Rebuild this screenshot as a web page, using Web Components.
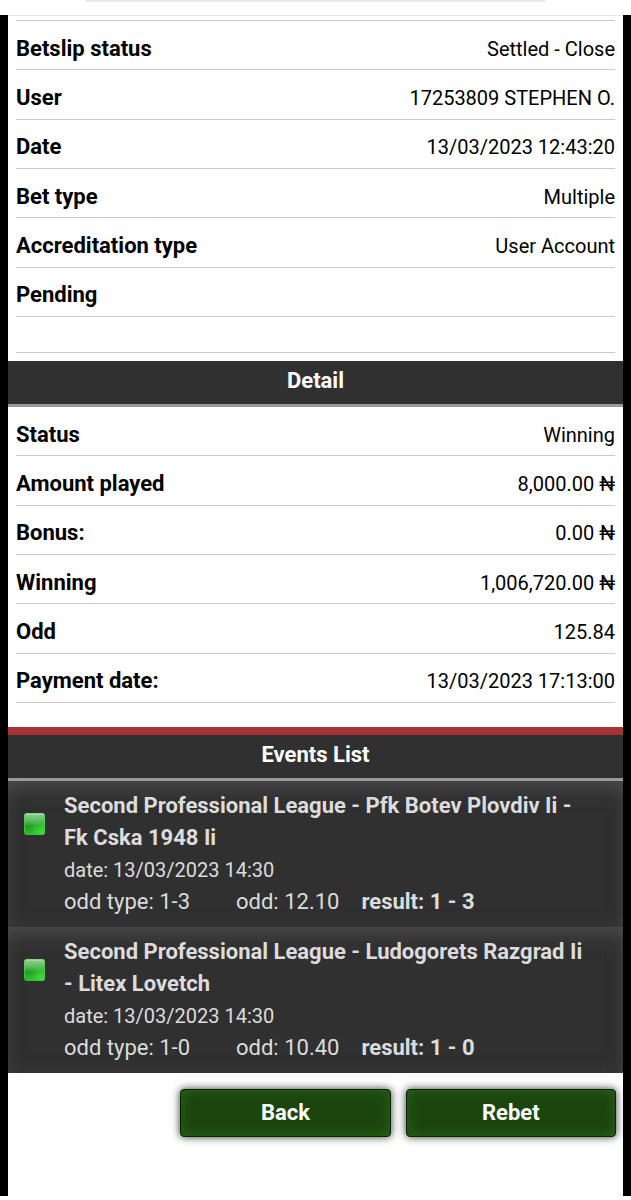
<!DOCTYPE html>
<html lang="en">
<head>
<meta charset="utf-8">
<meta name="viewport" content="width=device-width, initial-scale=1">
<title>Betslip</title>
<style>
  body {
    margin: 0;
    background: #fff;
    color: #000;
    font-family: Roboto, sans-serif;
  }
</style>
</head>
<body>

<betslip-page>
  <betslip-rows>
    <betslip-row label="Betslip status">Settled - Close</betslip-row>
    <betslip-row label="User">17253809 STEPHEN O.</betslip-row>
    <betslip-row label="Date">13/03/2023 12:43:20</betslip-row>
    <betslip-row label="Bet type">Multiple</betslip-row>
    <betslip-row label="Accreditation type">User Account</betslip-row>
    <betslip-row label="Pending"></betslip-row>
  </betslip-rows>
  <betslip-spacer></betslip-spacer>

  <betslip-heading>Detail</betslip-heading>
  <betslip-rows>
    <betslip-row label="Status">Winning</betslip-row>
    <betslip-row label="Amount played">8,000.00 ₦</betslip-row>
    <betslip-row label="Bonus:">0.00 ₦</betslip-row>
    <betslip-row label="Winning">1,006,720.00 ₦</betslip-row>
    <betslip-row label="Odd">125.84</betslip-row>
    <betslip-row label="Payment date:">13/03/2023 17:13:00</betslip-row>
  </betslip-rows>

  <betslip-heading accent>Events List</betslip-heading>
  <betslip-event date="13/03/2023 14:30" type="1-3" odd="12.10" result="1 - 3">Second Professional League - Pfk Botev Plovdiv Ii - Fk Cska 1948 Ii</betslip-event>
  <betslip-event date="13/03/2023 14:30" type="1-0" odd="10.40" result="1 - 0">Second Professional League - Ludogorets Razgrad Ii - Litex Lovetch</betslip-event>

  <betslip-button slot="actions">Back</betslip-button>
  <betslip-button slot="actions">Rebet</betslip-button>
</betslip-page>

<script>
const attach = (element, html) => {
  const template = document.createElement('template')
  template.innerHTML = html
  const shadow = element.attachShadow({ mode: 'open' })
  shadow.appendChild(template.content.cloneNode(true))
  return shadow
}

class BetslipPage extends HTMLElement {
  constructor() {
    super()
    attach(this, `
      <style>
        :host {
          display: flex;
          flex-direction: column;
          box-sizing: border-box;
          min-height: 100vh;
          padding-bottom: 4px;
        }

        header {
          height: 15px;
        }

        /* lower edge of the address bar */
        .address {
          width: 73%;
          height: 2px;
          margin: 0 auto;
          background: #e8e8e8;
          border-radius: 0 0 4px 4px;
        }

        main {
          flex: 1;
          background: #fff;
          border: solid #000;
          border-width: 0 8px;
        }

        .top {
          height: 4px;
          padding: 0 8px;
          border-top: 1px solid #e6e6e6;
        }

        .top hr {
          margin: 0;
          padding-top: 4px;
          border: 0;
          border-bottom: 1px solid #c8c8c8;
        }

        .top + slot {
          display: block;
          margin-top: 1px;
        }

        .actions {
          display: flex;
          justify-content: flex-end;
          gap: 15px;
          padding: 16px 7px;
        }
      </style>
      <header><div class="address"></div></header>
      <main>
        <div class="top"><hr></div>
        <slot></slot>
        <div class="actions"><slot name="actions"></slot></div>
      </main>
    `)
  }
}

class BetslipRows extends HTMLElement {
  constructor() {
    super()
    attach(this, `
      <style>
        :host {
          display: grid;
          grid-auto-rows: 1fr;
          min-height: 296px;
          padding: 0 8px;
        }
      </style>
      <slot></slot>
    `)
  }
}

class BetslipRow extends HTMLElement {
  constructor() {
    super()
    const shadow = attach(this, `
      <style>
        :host {
          display: flex;
          align-items: center;
          justify-content: space-between;
          border-bottom: 1px solid #ccc;
          line-height: 32px;
          padding-top: 7px;
        }

        .label {
          font-size: 22px;
          font-weight: 700;
        }

        .value {
          font-size: 20px;
          text-align: right;
        }
      </style>
      <span class="label"></span>
      <span class="value"><slot></slot></span>
    `)
    shadow.querySelector('.label').textContent = this.getAttribute('label')
  }
}

class BetslipSpacer extends HTMLElement {
  constructor() {
    super()
    attach(this, `
      <style>
        :host {
          display: block;
          height: 35px;
          margin: 0 8px 8px;
          border-bottom: 1px solid #ccc;
        }
      </style>
    `)
  }
}

class BetslipHeading extends HTMLElement {
  constructor() {
    super()
    attach(this, `
      <style>
        :host {
          display: block;
          background: #303030;
          border-bottom: 3px solid #999;
          color: #fff;
        }

        :host([accent]) {
          margin-top: 24px;
          border-top: 8px solid #a83236;
        }

        h2 {
          margin: 0;
          padding: 4px 0 7px;
          font-size: 22px;
          font-weight: 700;
          line-height: 32px;
          text-align: center;
        }
      </style>
      <h2><slot></slot></h2>
    `)
  }
}

class BetslipEvent extends HTMLElement {
  constructor() {
    super()
    const shadow = attach(this, `
      <style>
        :host {
          display: grid;
          grid-template-columns: 24px 1fr;
          gap: 16px;
          padding: 9px 32px 9px 16px;
          background: #303030;
          box-shadow: inset 0 14px 20px -8px #4c4c4c, inset 0 0 16px #393939;
          color: #dcdcdc;
          font-size: 22px;
          line-height: 32px;
        }

        svg {
          display: block;
          margin-top: 23px;
        }

        h3, p {
          margin: 0;
          font-size: inherit;
        }

        .date {
          font-size: 20px;
        }

        .odds {
          display: flex;
          gap: 22px;
        }

        .type {
          min-width: 150px;
        }
      </style>
      <svg width="22" height="22" viewBox="0 0 22 22" role="img" aria-label="won">
        <defs>
          <linearGradient id="base" x1="0" y1="0" x2="0" y2="1">
            <stop offset="0" stop-color="#8fd493"/>
            <stop offset=".35" stop-color="#5cbd5e"/>
            <stop offset=".6" stop-color="#20a020"/>
            <stop offset="1" stop-color="#35bd31"/>
          </linearGradient>
          <radialGradient id="glow" cx=".85" cy=".85" r=".6">
            <stop offset="0" stop-color="#3fdc39"/>
            <stop offset="1" stop-color="#3fdc39" stop-opacity="0"/>
          </radialGradient>
        </defs>
        <rect width="21" height="22" rx="3" fill="url(#base)"/>
        <rect width="21" height="22" rx="3" fill="url(#glow)"/>
        <path d="M2 1.5h17" stroke="#b4dfb5" stroke-opacity=".6"/>
        <path d="M.5 3v16M20.5 3v16" stroke="#5dcc59" stroke-opacity=".6"/>
      </svg>
      <div>
        <h3><slot></slot></h3>
        <p class="date"></p>
        <p class="odds">
          <span class="type"></span>
          <span class="odd"></span>
          <b class="result"></b>
        </p>
      </div>
    `)
    const text = {
      date: 'date: ' + this.getAttribute('date'),
      type: 'odd type: ' + this.getAttribute('type'),
      odd: 'odd: ' + this.getAttribute('odd'),
      result: 'result: ' + this.getAttribute('result')
    }
    for (const name in text)
      shadow.querySelector('.' + name).textContent = text[name]
  }
}

class BetslipButton extends HTMLElement {
  constructor() {
    super()
    attach(this, `
      <style>
        :host {
          display: block;
          flex: 0 1 35%;
        }

        button {
          display: block;
          width: 100%;
          height: 48px;
          padding: 0;
          border: 1px solid #0b2204;
          border-radius: 4px;
          background: #1b450d;
          box-shadow: 0 0 8px #333, inset 0 0 14px #28661a;
          color: #fff;
          font: 700 22px/32px Roboto, sans-serif;
          cursor: pointer;
        }
      </style>
      <button type="button"><slot></slot></button>
    `)
  }
}

customElements.define('betslip-page', BetslipPage)
customElements.define('betslip-rows', BetslipRows)
customElements.define('betslip-row', BetslipRow)
customElements.define('betslip-spacer', BetslipSpacer)
customElements.define('betslip-heading', BetslipHeading)
customElements.define('betslip-event', BetslipEvent)
customElements.define('betslip-button', BetslipButton)
</script>
</body>
</html>
